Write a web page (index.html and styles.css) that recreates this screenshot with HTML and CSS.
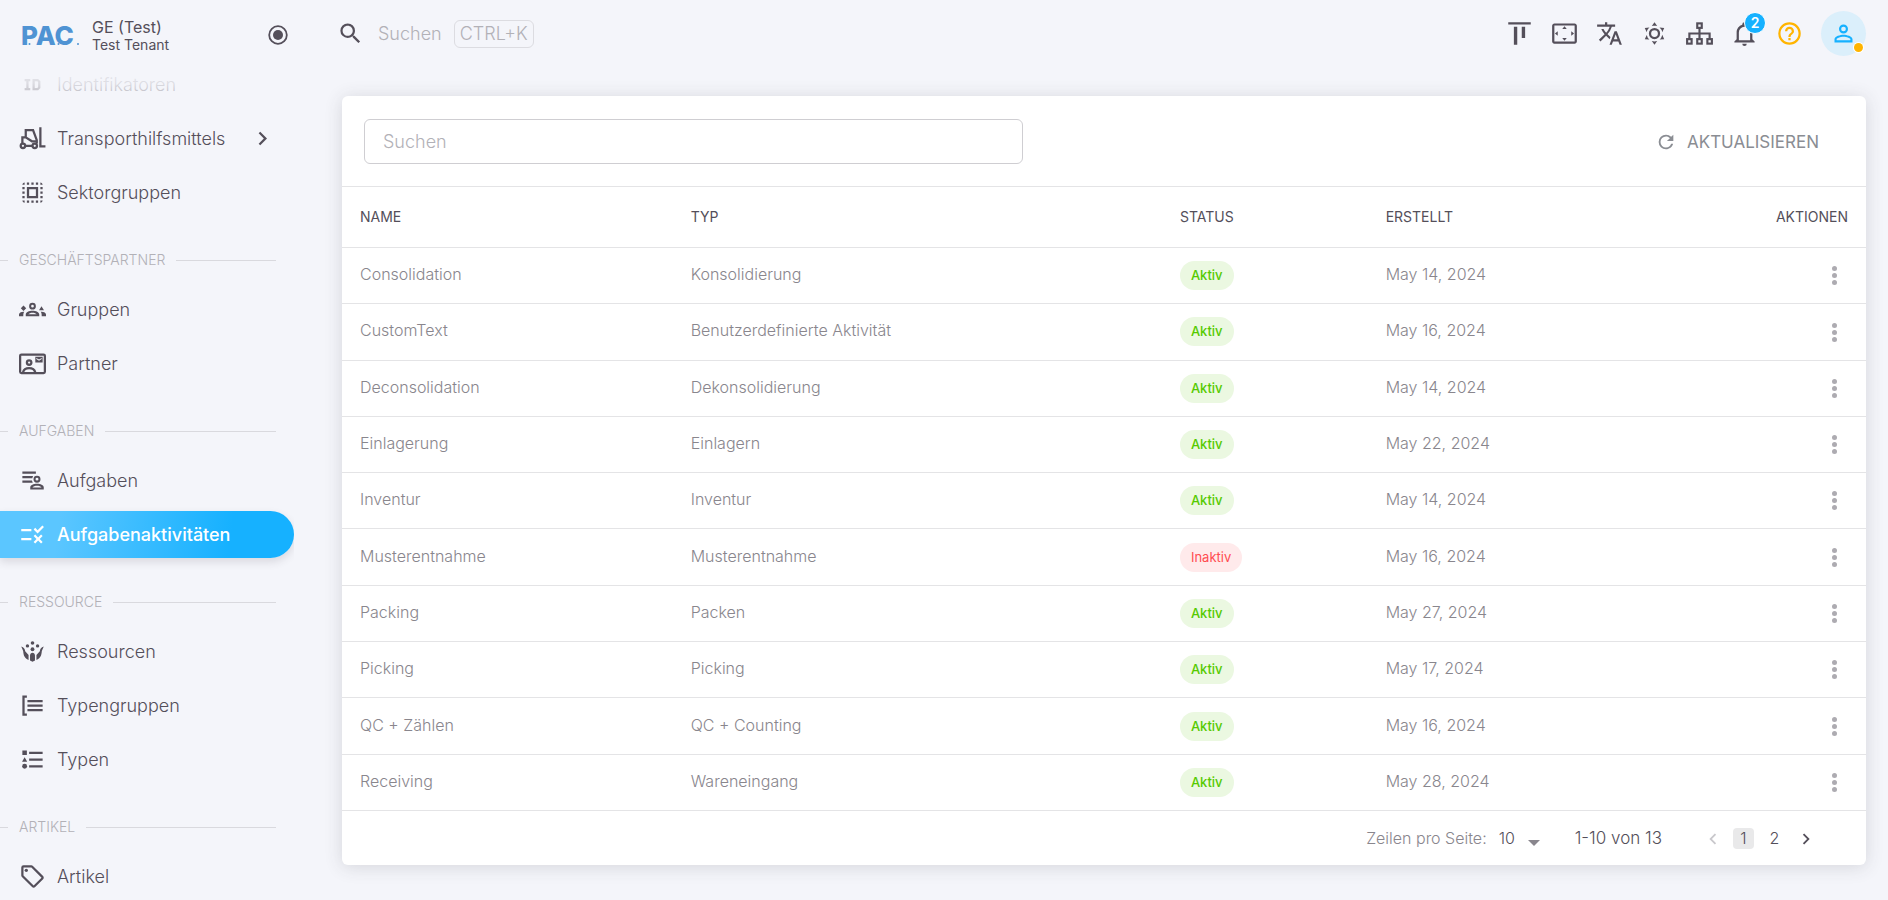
FILE: index.html
```html
<!DOCTYPE html>
<html lang="de">
<head>
<meta charset="utf-8">
<meta name="viewport" content="width=device-width, initial-scale=1">
<title>Aufgabenaktivitäten</title>
<link rel="stylesheet" href="styles.css">
</head>
<body>
<div class="app">
  <aside class="sidebar">
    <div class="brand">
      <svg class="logo" viewBox="0 0 60 32" role="img" aria-label="PAC">
        <text class="logo-text" x="0" y="25">PAC</text>
        <circle cx="8.500" cy="24" r="1"/><circle cx="37.500" cy="24" r="1"/><circle cx="57" cy="24" r="1"/>
      </svg>
      <div class="tenant">
        <span class="tenant-name">GE (Test)</span>
        <span class="tenant-sub">Test Tenant</span>
      </div>
      <button class="pin" aria-label="Menü fixieren"><svg class="icon" viewBox="0 0 24 24"><circle cx="12" cy="12" r="8.800" fill="none" stroke="currentColor" stroke-width="1.800"/><circle cx="12" cy="12" r="5"/></svg></button>
    </div>
    <nav class="nav">
      <a class="nav-item" href="#"><svg class="icon" viewBox="0 0 24 24"><path d="M5 7h5v2H8.500v6H10v2H5v-2h1.500V9H5zM12 7h5l2 2v6l-2 2h-5zM14 9v6h2.300l.7-.7V9.700l-.7-.7z"/></svg><span>Identifikatoren</span></a>
      <a class="nav-item" href="#"><svg class="icon" viewBox="0 0 24 24"><g fill="none" stroke="currentColor" stroke-width="2"><path d="M3 16.500V11h3V4.500h6.500l3.300 9v3M6 18.500h6M6 11l5.500 3.500h4M19 2v17h4.500"/><circle cx="3.500" cy="18.500" r="2"/><circle cx="14" cy="18.500" r="2"/></g></svg><span>Transporthilfsmittels</span><svg class="icon chevron" viewBox="0 0 24 24"><path d="M8.590 16.580L13.170 12 8.590 7.410 10 6l6 6-6 6z"/></svg></a>
      <a class="nav-item" href="#"><svg class="icon" viewBox="0 0 24 24"><path d="M3 5h2V3c-1.100 0-2 .9-2 2zm0 8h2v-2H3v2zm4 8h2v-2H7v2zM3 9h2V7H3v2zm10-6h-2v2h2V3zm6 0v2h2c0-1.100-.9-2-2-2zM5 21v-2H3c0 1.100.9 2 2 2zm-2-4h2v-2H3v2zM9 3H7v2h2V3zm2 18h2v-2h-2v2zm8-8h2v-2h-2v2zm0 8c1.100 0 2-.9 2-2h-2v2zm0-12h2V7h-2v2zm0 8h2v-2h-2v2zm-4 4h2v-2h-2v2zm0-16h2V3h-2v2zM7 17h10V7H7v10zm2-8h6v6H9V9z"/></svg><span>Sektorgruppen</span></a>
      <h2 class="nav-section">Geschäftspartner</h2>
      <a class="nav-item" href="#"><svg class="icon" viewBox="0 0 24 24"><circle cx="12" cy="9" r="2.100" fill="none" stroke="currentColor" stroke-width="1.800"/><path d="M6 18v-1.600C6 14.300 9 13 12 13s6 1.300 6 3.400V18zM8.300 16.200h7.400c-.6-.8-2-1.400-3.700-1.400s-3.100.6-3.700 1.400zM4 8.500l2.400 2.400L4 13.300l-2.400-2.400zM20 9l2.200 3.700h-4.400zM0 18v-1.500c0-1.600 2-2.700 4.700-2.500-.7.9-.9 1.800-.9 4zM24 18v-1.500c0-1.600-2-2.700-4.700-2.500.7.9.9 1.800.9 4z" fill-rule="evenodd"/></svg><span>Gruppen</span></a>
      <a class="nav-item" href="#"><svg class="icon" viewBox="0 0 24 24"><g fill="none" stroke="currentColor" stroke-width="2"><rect x="1" y="4" width="22" height="16.500" rx="1.200"/><circle cx="9" cy="11.200" r="2"/><path d="M3.500 20c.8-3 3-3.800 5.500-3.800s4.700.8 5.500 3.800"/></g><path d="M14.500 6H21v5h-6.500zM15.400 7v1l2.400 1.600L20.200 8V7l-2.400 1.500z" fill-rule="evenodd"/></svg><span>Partner</span></a>
      <h2 class="nav-section">Aufgaben</h2>
      <a class="nav-item" href="#"><svg class="icon" viewBox="0 0 24 24"><path d="M3 4h12v2H3zM3 8h9.500l-.7 2H3zM3 12h8.500l.7 2H3zM10 20v-2c0-2 3-3.200 6-3.200s6 1.200 6 3.200v2zm2-1.700h8c-.6-1-2.200-1.600-4-1.600s-3.400.6-4 1.600z" fill-rule="evenodd"/><circle cx="16" cy="10.800" r="2.200" fill="none" stroke="currentColor" stroke-width="1.800"/></svg><span>Aufgaben</span></a>
      <a class="nav-item active" href="#" aria-current="page"><svg class="icon" viewBox="0 0 24 24"><path d="M16.540 11L13 7.460l1.410-1.410 2.120 2.120 4.240-4.240 1.410 1.410L16.540 11zM11 7H2v2h9V7zm10 6.410L19.590 12 17 14.590 14.410 12 13 13.410 15.590 16 13 18.590 14.410 20 17 17.410 19.590 20 21 18.590 18.410 16 21 13.410zM11 15H2v2h9v-2z"/></svg><span>Aufgabenaktivitäten</span></a>
      <h2 class="nav-section">Ressource</h2>
      <a class="nav-item" href="#"><svg class="icon" viewBox="0 0 24 24"><circle cx="12" cy="4.500" r="1.600"/><circle cx="7.500" cy="7" r="1.500"/><circle cx="16.500" cy="7" r="1.500"/><circle cx="12" cy="10" r="1.700"/><path d="M9.800 20v-4.500c0-1.500 1-2.500 2.200-2.500s2.200 1 2.200 2.500V20l-2.200 1zM2 7.500c2.300.8 3.200 2 3.500 4.200l3 3.300v4.500C5 18 4 15.500 3.700 11.500zM22 7.500c-2.300.8-3.200 2-3.500 4.200l-3 3.300v4.500c3.500-1.500 4.500-4 4.800-8z"/></svg><span>Ressourcen</span></a>
      <a class="nav-item" href="#"><svg class="icon" viewBox="0 0 24 24"><path d="M3 3h4v2H5v14h2v2H3zM7.500 7H21v2H7.500zM7.500 11H21v2H7.500zM7.500 15H21v2H7.500z"/></svg><span>Typengruppen</span></a>
      <a class="nav-item" href="#"><svg class="icon" viewBox="0 0 24 24"><path d="M3 4h4v4H3zM5 10l2.300 4H2.700zM9 5h12v2H9zM9 11h12v2H9zM9 17h12v2H9z"/><circle cx="5" cy="18" r="2.200"/></svg><span>Typen</span></a>
      <h2 class="nav-section">Artikel</h2>
      <a class="nav-item" href="#"><svg class="icon" viewBox="0 0 24 24"><path d="M21.410 11.580l-9-9A2 2 0 0 0 11 2H4a2 2 0 0 0-2 2v7a2 2 0 0 0 .59 1.420l9 9A2 2 0 0 0 13 22a2 2 0 0 0 1.410-.59l7-7A2 2 0 0 0 22 13a2 2 0 0 0-.59-1.420M13 20l-9-9V4h7l9 9z"/><circle cx="6.500" cy="6.500" r="1.500"/></svg><span>Artikel</span></a>
    </nav>
  </aside>

  <div class="content">
    <header class="topbar">
      <button class="quick-search">
        <svg class="icon" viewBox="0 0 24 24"><path d="M9.500 3A6.500 6.500 0 0 1 16 9.500c0 1.610-.59 3.090-1.560 4.230l.27.27h.79l5 5-1.500 1.500-5-5v-.79l-.27-.27A6.516 6.516 0 0 1 9.500 16a6.500 6.500 0 0 1 0-13m0 2C7 5 5 7 5 9.500S7 14 9.500 14 14 12 14 9.500 12 5 9.500 5z"/></svg>
        <span>Suchen</span><kbd>CTRL+K</kbd>
      </button>
      <div class="actions">
        <button aria-label="Ausrichtung"><svg class="icon" viewBox="0 0 24 24"><path d="M22 2v2H2V2h20zM7 22h3V6H7v16zm7-6h3V6h-3v10z"/></svg></button>
        <button aria-label="Vollbild"><svg class="icon" viewBox="0 0 24 24"><path d="M12.010 5.500L10 8h4l-1.990-2.500zM18 10v4l2.500-1.990L18 10zM6 10l-2.500 2.010L6 14v-4zm8 6h-4l2.010 2.500L14 16zm7-13H3c-1.100 0-2 .9-2 2v14c0 1.100.9 2 2 2h18c1.100 0 2-.9 2-2V5c0-1.100-.9-2-2-2zm0 16.010H3V4.990h18v14.020z"/></svg></button>
        <button aria-label="Sprache"><svg class="icon" viewBox="0 0 24 24"><path d="M12.870 15.070l-2.540-2.510.03-.03A17.520 17.520 0 0 0 14.070 6H17V4h-7V2H8v2H1v1.990h11.170C11.500 7.920 10.440 9.750 9 11.350 8.070 10.320 7.300 9.190 6.690 8h-2c.73 1.630 1.730 3.170 2.980 4.560l-5.090 5.020L4 19l5-5 3.110 3.110.76-2.040zM18.500 10h-2L12 22h2l1.120-3h4.750L21 22h2l-4.500-12zm-2.620 7l1.620-4.330L19.120 17h-3.240z"/></svg></button>
        <button aria-label="Helles Design"><svg class="icon" viewBox="0 0 24 24"><path d="M12 7a5 5 0 0 1 5 5 5 5 0 0 1-5 5 5 5 0 0 1-5-5 5 5 0 0 1 5-5m0 2a3 3 0 0 0-3 3 3 3 0 0 0 3 3 3 3 0 0 0 3-3 3 3 0 0 0-3-3m0-7l2.390 3.420C13.650 5.150 12.840 5 12 5s-1.650.15-2.390.42L12 2M3.340 7l4.160-.35A7.200 7.200 0 0 0 5.940 8.500c-.44.740-.69 1.500-.83 2.290L3.340 7m.02 10l1.760-3.770a7.131 7.131 0 0 0 2.380 4.140L3.360 17M20.650 7l-1.770 3.790a7.023 7.023 0 0 0-2.380-4.150l4.150.36m-.01 10l-4.140.36c.59-.51 1.120-1.140 1.540-1.860.42-.73.69-1.500.83-2.290L20.640 17M12 22l-2.410-3.440c.740.270 1.550.440 2.410.440.820 0 1.630-.17 2.370-.44L12 22z"/></svg></button>
        <button aria-label="Struktur"><svg class="icon" viewBox="0 0 24 24"><g fill="none" stroke="currentColor" stroke-width="1.900"><rect x="10" y="3" width="4" height="4"/><rect x="1" y="17" width="4" height="4"/><rect x="10" y="17" width="4" height="4"/><rect x="19" y="17" width="4" height="4"/><path d="M12 7v10M3 17v-5h18v5"/></g></svg></button>
        <button aria-label="Benachrichtigungen" class="bell"><svg class="icon" viewBox="0 0 24 24"><path d="M10 21h4a2 2 0 0 1-4 0m11-2v1H3v-1l2-2v-6c0-3.100 2.030-5.830 5-6.710V4a2 2 0 0 1 4 0v.29c2.970.88 5 3.610 5 6.710v6l2 2m-4-8a5 5 0 0 0-10 0v7h10v-7z"/></svg><span class="badge">2</span></button>
        <button aria-label="Hilfe" class="help"><svg class="icon" viewBox="0 0 24 24"><path d="M11 18h2v-2h-2v2m1-16A10 10 0 0 0 2 12a10 10 0 0 0 10 10 10 10 0 0 0 10-10A10 10 0 0 0 12 2m0 18c-4.410 0-8-3.590-8-8s3.590-8 8-8 8 3.590 8 8-3.590 8-8 8m0-14a4 4 0 0 0-4 4h2a2 2 0 0 1 4 0c0 2-3 1.750-3 5h2c0-2.250 3-2.500 3-5a4 4 0 0 0-4-4z"/></svg></button>
        <button aria-label="Profil" class="avatar"><svg class="icon" viewBox="0 0 24 24"><path d="M12 4a4 4 0 1 1 0 8 4 4 0 0 1 0-8m0 1.900a2.100 2.100 0 1 0 0 4.200 2.100 2.100 0 0 0 0-4.200M12 13c2.670 0 8 1.330 8 4v3H4v-3c0-2.670 5.330-4 8-4m0 1.900c-2.970 0-6.100 1.460-6.100 2.100v1.100h12.200V17c0-.64-3.130-2.100-6.100-2.100z"/></svg><span class="dot"></span></button>
      </div>
    </header>

    <main class="card">
      <div class="card-head">
        <input class="filter" type="search" placeholder="Suchen" aria-label="Suchen">
        <button class="refresh"><svg class="icon" viewBox="0 0 24 24"><path d="M17.650 6.350A7.958 7.958 0 0 0 12 4a8 8 0 0 0-8 8 8 8 0 0 0 8 8c3.730 0 6.840-2.550 7.730-6h-2.080A5.990 5.990 0 0 1 12 18a6 6 0 0 1-6-6 6 6 0 0 1 6-6c1.660 0 3.140.690 4.220 1.780L13 11h7V4l-2.350 2.350z"/></svg>Aktualisieren</button>
      </div>
      <div class="table-wrap">
      <table>
        <colgroup><col class="c-name"><col class="c-type"><col class="c-status"><col class="c-date"><col class="c-act"></colgroup>
        <thead><tr><th>Name</th><th>Typ</th><th>Status</th><th>Erstellt</th><th class="right">Aktionen</th></tr></thead>
        <tbody>
          <tr><td>Consolidation</td><td>Konsolidierung</td><td class="mid"><span class="chip">Aktiv</span></td><td>May 14, 2024</td><td class="mid right"><button class="more" aria-label="Aktionen"><i></i><i></i><i></i></button></td></tr>
          <tr><td>CustomText</td><td>Benutzerdefinierte Aktivität</td><td class="mid"><span class="chip">Aktiv</span></td><td>May 16, 2024</td><td class="mid right"><button class="more" aria-label="Aktionen"><i></i><i></i><i></i></button></td></tr>
          <tr><td>Deconsolidation</td><td>Dekonsolidierung</td><td class="mid"><span class="chip">Aktiv</span></td><td>May 14, 2024</td><td class="mid right"><button class="more" aria-label="Aktionen"><i></i><i></i><i></i></button></td></tr>
          <tr><td>Einlagerung</td><td>Einlagern</td><td class="mid"><span class="chip">Aktiv</span></td><td>May 22, 2024</td><td class="mid right"><button class="more" aria-label="Aktionen"><i></i><i></i><i></i></button></td></tr>
          <tr><td>Inventur</td><td>Inventur</td><td class="mid"><span class="chip">Aktiv</span></td><td>May 14, 2024</td><td class="mid right"><button class="more" aria-label="Aktionen"><i></i><i></i><i></i></button></td></tr>
          <tr><td>Musterentnahme</td><td>Musterentnahme</td><td class="mid"><span class="chip off">Inaktiv</span></td><td>May 16, 2024</td><td class="mid right"><button class="more" aria-label="Aktionen"><i></i><i></i><i></i></button></td></tr>
          <tr><td>Packing</td><td>Packen</td><td class="mid"><span class="chip">Aktiv</span></td><td>May 27, 2024</td><td class="mid right"><button class="more" aria-label="Aktionen"><i></i><i></i><i></i></button></td></tr>
          <tr><td>Picking</td><td>Picking</td><td class="mid"><span class="chip">Aktiv</span></td><td>May 17, 2024</td><td class="mid right"><button class="more" aria-label="Aktionen"><i></i><i></i><i></i></button></td></tr>
          <tr><td>QC + Zählen</td><td>QC + Counting</td><td class="mid"><span class="chip">Aktiv</span></td><td>May 16, 2024</td><td class="mid right"><button class="more" aria-label="Aktionen"><i></i><i></i><i></i></button></td></tr>
          <tr><td>Receiving</td><td>Wareneingang</td><td class="mid"><span class="chip">Aktiv</span></td><td>May 28, 2024</td><td class="mid right"><button class="more" aria-label="Aktionen"><i></i><i></i><i></i></button></td></tr>
        </tbody>
      </table>
      </div>
      <footer class="pager">
        <label for="rows">Zeilen pro Seite:</label>
        <span class="rows"><select id="rows"><option>10</option><option>25</option><option>50</option></select><span class="caret"></span></span>
        <span class="range">1-10 von 13</span>
        <span class="pages">
          <button disabled aria-label="Vorherige Seite"><svg class="icon" viewBox="0 0 24 24"><path d="M15.410 16.580L10.830 12l4.580-4.590L14 6l-6 6 6 6z"/></svg></button>
          <button class="current" aria-current="page">1</button>
          <button>2</button>
          <button aria-label="Nächste Seite"><svg class="icon" viewBox="0 0 24 24"><path d="M8.590 16.580L13.170 12 8.590 7.410 10 6l6 6-6 6z"/></svg></button>
        </span>
      </footer>
    </main>
  </div>
</div>
</body>
</html>
```

FILE: styles.css
```css
:root {
  --bg: #f4f5fa;
  --ink: #544f5a;
  --line: #e4e4e6;
  --muted: #89868d;
  --faint: #b2b1b7;
  --primary: #16b1ff;
  --warn: #ffb400;
}

* { box-sizing: border-box; }

body {
  margin: 0;
  background: var(--bg);
  color: var(--ink);
  font: 300 18px/24px Inter, "Liberation Sans", sans-serif;
}

button, input, select {
  font: inherit;
  color: inherit;
  background: none;
  border: 0;
  padding: 0;
  margin: 0;
}

button { cursor: pointer; }

.icon {
  display: block;
  width: 27px;
  height: 27px;
  flex: none;
  fill: currentColor;
}

.app {
  display: flex;
  height: 100vh;
  overflow: hidden;
}

/* Sidebar */
.sidebar {
  flex: 0 0 294px;
  display: flex;
  flex-direction: column;
  min-height: 0;
}

.brand {
  flex: none;
  display: flex;
  align-items: flex-start;
  height: 54px;
  padding: 18px 4px 0 21px;
}

.logo {
  width: 60px;
  height: 32px;
  margin: 2px 11px 0 0;
  overflow: visible;
  fill: #4f93d3;
}

.logo-text { font: 800 26px/32px Inter, sans-serif; }

.tenant {
  flex: 1;
  display: flex;
  flex-direction: column;
}

.tenant-name { font-size: 16px; font-weight: 400; line-height: 18px; }
.tenant-sub { font-size: 14px; font-weight: 400; line-height: 18px; }

.pin { margin: 5px 0 0; }
.pin .icon { width: 24px; height: 24px; }

.nav {
  position: relative;
  flex: 1;
  min-height: 0;
  overflow: hidden;
}

.nav::before {
  content: "";
  position: absolute;
  z-index: 1;
  inset: 0 0 auto;
  height: 66px;
  background: linear-gradient(var(--bg) 5%, rgba(244, 245, 250, 0.85) 45%, rgba(244, 245, 250, 0.5) 75%, rgba(244, 245, 250, 0));
}

.nav-item {
  display: flex;
  align-items: center;
  gap: 11px;
  height: 47px;
  margin-top: 7px;
  padding: 0 18px 0 19px;
  border-radius: 0 24px 24px 0;
  color: inherit;
  text-decoration: none;
}

.nav-item .chevron { margin-left: auto; }

.nav-item.active {
  color: #fff;
  font-weight: 500;
  background: linear-gradient(98deg, #5bc6ff 20%, var(--primary) 78%);
  box-shadow: 0 4px 8px rgba(58, 53, 65, 0.14);
}

.nav-section {
  display: flex;
  align-items: center;
  gap: 11px;
  height: 20px;
  margin: 34px 18px 16px 0;
  color: var(--faint);
  font-size: 14px;
  font-weight: 300;
  line-height: 20px;
  text-transform: uppercase;
}

.nav-section::before,
.nav-section::after {
  content: "";
  height: 1px;
  background: #d9d9de;
}

.nav-section::before { width: 8px; }
.nav-section::after { flex: 1; }
.nav-section + .nav-item { margin-top: 0; }

/* Top bar */
.content {
  flex: 1;
  min-width: 0;
  display: flex;
  flex-direction: column;
  padding: 0 22px 35px 48px;
}

.topbar {
  flex: none;
  display: flex;
  justify-content: space-between;
  align-items: center;
  height: 67px;
  margin-bottom: 29px;
}

.quick-search {
  display: flex;
  align-items: center;
  color: var(--faint);
}

.quick-search .icon {
  margin: 0 14px 0 -5px;
  color: var(--ink);
}

kbd {
  margin-left: 12px;
  padding: 1px 5px;
  border: 1px solid #dcdce1;
  border-radius: 6px;
  font: inherit;
}

.actions { display: flex; align-items: center; gap: 18px; }
.actions button { position: relative; }

.badge {
  position: absolute;
  top: -8px;
  right: -8px;
  width: 22px;
  height: 22px;
  border: 1px solid #fff;
  border-radius: 50%;
  background: var(--primary);
  color: #fff;
  font-size: 14px;
  font-weight: 600;
  line-height: 19px;
  text-align: center;
}

.help { color: var(--warn); }

.actions .avatar {
  display: grid;
  place-items: center;
  width: 45px;
  height: 45px;
  border-radius: 50%;
  background: #dbeffb;
  color: var(--primary);
}

.dot {
  position: absolute;
  right: 3px;
  bottom: 4px;
  width: 9px;
  height: 9px;
  border-radius: 50%;
  background: var(--warn);
  box-shadow: 0 0 0 1px #fff;
}

/* Card */
.card {
  flex: 1;
  min-height: 0;
  display: flex;
  flex-direction: column;
  background: #fff;
  border-radius: 6px;
  box-shadow: 0 2px 18px rgba(58, 53, 65, 0.16);
}

.card-head {
  flex: none;
  display: flex;
  align-items: center;
  justify-content: space-between;
  padding: 23px 22px 22px;
  border-bottom: 1px solid var(--line);
}

.filter {
  width: 659px;
  height: 45px;
  padding: 0 18px;
  border: 1px solid #cfced2;
  border-radius: 6px;
  appearance: none;
}

.filter::placeholder { color: var(--faint); opacity: 1; }

.refresh {
  display: flex;
  align-items: center;
  gap: 10px;
  padding: 0 25px;
  color: #8a8d93;
  font-size: 17px;
  font-weight: 400;
  text-transform: uppercase;
}

.refresh .icon { width: 22px; height: 22px; }

.table-wrap { flex: 1; min-height: 0; display: flex; }

table {
  width: 100%;
  table-layout: fixed;
  border-collapse: separate;
  border-spacing: 0;
}

.c-name { width: 21.7%; }
.c-type { width: 32.1%; }
.c-status { width: 13.5%; }
.c-date { width: 20%; }

th, td {
  padding: 0 18px;
  border-bottom: 1px solid var(--line);
  text-align: left;
  font-size: 16px;
}

th {
  height: 61px;
  font-size: 14px;
  font-weight: 400;
  text-transform: uppercase;
}

td { padding-bottom: 3px; color: var(--muted); }
.mid { padding-bottom: 0; }
.right { text-align: right; }

.chip {
  display: inline-block;
  height: 29px;
  padding: 0 11px;
  border-radius: 15px;
  background: #ebf8e1;
  color: #56ca00;
  font-size: 13px;
  font-weight: 500;
  line-height: 29px;
  vertical-align: middle;
}

.chip.off { background: #ffeaeb; color: #ff4c51; font-weight: 400; }

.more {
  display: inline-flex;
  flex-direction: column;
  align-items: center;
  justify-content: center;
  gap: 2px;
  width: 27px;
  height: 27px;
  vertical-align: middle;
}

.more i {
  width: 5px;
  height: 5px;
  border-radius: 50%;
  background: #adabb1;
}

/* Pagination */
.pager {
  flex: none;
  display: flex;
  align-items: center;
  justify-content: flex-end;
  height: 54px;
  padding-right: 50px;
  font-size: 16px;
}

.pager label { color: var(--muted); }

.rows {
  display: flex;
  align-items: center;
  margin: 0 35px 0 12px;
}

.rows select { width: 29px; appearance: none; }

.caret {
  margin-top: 10px;
  border: 6px solid transparent;
  border-top-color: var(--muted);
  border-bottom: 0;
}

.range { margin-right: 40px; font-size: 17px; }

.pages { display: flex; align-items: center; gap: 10px; }

.pages button {
  width: 21px;
  height: 21px;
  display: grid;
  place-items: center;
  border-radius: 4px;
  line-height: 21px;
}

.pages .icon { width: 22px; height: 22px; }
.pages button:disabled { color: #c9c8cc; }
.pages .current { background: #e9e9ea; }
```
